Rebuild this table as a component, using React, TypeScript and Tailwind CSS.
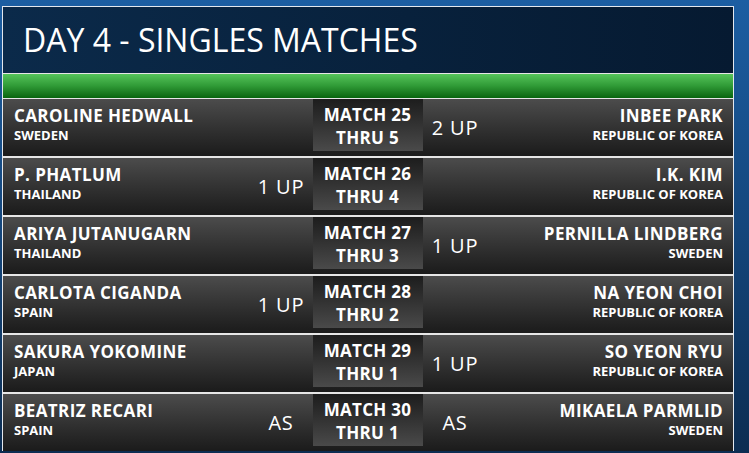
import React from "react";

type Row = {
  l: string; lc: string; ls?: string; m: string; t: string; rs?: string; r: string; rc: string;
};

const rows: Row[] = [
  { l: "CAROLINE HEDWALL", lc: "SWEDEN", m: "MATCH 25", t: "THRU 5", rs: "2 UP", r: "INBEE PARK", rc: "REPUBLIC OF KOREA" },
  { l: "P. PHATLUM", lc: "THAILAND", ls: "1 UP", m: "MATCH 26", t: "THRU 4", r: "I.K. KIM", rc: "REPUBLIC OF KOREA" },
  { l: "ARIYA JUTANUGARN", lc: "THAILAND", m: "MATCH 27", t: "THRU 3", rs: "1 UP", r: "PERNILLA LINDBERG", rc: "SWEDEN" },
  { l: "CARLOTA CIGANDA", lc: "SPAIN", ls: "1 UP", m: "MATCH 28", t: "THRU 2", r: "NA YEON CHOI", rc: "REPUBLIC OF KOREA" },
  { l: "SAKURA YOKOMINE", lc: "JAPAN", m: "MATCH 29", t: "THRU 1", rs: "1 UP", r: "SO YEON RYU", rc: "REPUBLIC OF KOREA" },
  { l: "BEATRIZ RECARI", lc: "SPAIN", ls: "AS", m: "MATCH 30", t: "THRU 1", rs: "AS", r: "MIKAELA PARMLID", rc: "SWEDEN" },
];

export default function App() {
  return (
    <div
      className="w-[749px] h-[453px] overflow-hidden bg-gradient-to-b from-[#1c5ea2] via-[#14467c] to-[#0c2d52] pt-[6px] pl-[2px] text-white"
      style={{ fontFamily: '"Open Sans", "Noto Sans", sans-serif' }}
    >
      <div className="w-[732px] border-x border-t border-[#e4e8ee] bg-[#e6e6e6]">
        <div className="h-[66px] bg-gradient-to-r from-[#0b2a4a] to-[#061a31] pl-[20px] pt-[13px]">
          <div className="text-[32px] leading-[40px] font-normal text-white">DAY 4 - SINGLES MATCHES</div>
        </div>
        <div className="h-[24px] mt-[1px] bg-gradient-to-b from-[#55c45a] via-[#2f9a36] to-[#07650d]" />
        <div className="pt-[1px]">
          {rows.map((r, i) => (
            <div key={i} className="flex h-[57px] mb-[2px] bg-gradient-to-b from-[#4c4c4c] to-[#1b1b1b]">
              <div className="flex-1 pl-[11px] pt-[7px]">
                <div className="text-[17px] leading-[20px] font-bold tracking-[0.4px] whitespace-nowrap">{r.l}</div>
                <div className="text-[13px] leading-[16px] font-bold mt-[1px] whitespace-nowrap">{r.lc}</div>
              </div>
              <div className="w-[63px] text-center pt-[16px] text-[20px] leading-[26px] font-medium tracking-[0.8px]">{r.ls ?? ""}</div>
              <div className="w-[110px] h-[52px] bg-gradient-to-b from-[#1d1d1d] to-[#4a4a4a] text-center pt-[4px] text-[17px] leading-[23px] font-bold tracking-[0.3px] whitespace-nowrap">
                <div>{r.m}</div>
                <div>{r.t}</div>
              </div>
              <div className="w-[65px] text-center pt-[16px] text-[20px] leading-[26px] font-medium tracking-[0.8px]">{r.rs ?? ""}</div>
              <div className="flex-1 pr-[10px] pt-[7px] text-right">
                <div className="text-[17px] leading-[20px] font-bold tracking-[0.4px] whitespace-nowrap">{r.r}</div>
                <div className="text-[13px] leading-[16px] font-bold mt-[1px] whitespace-nowrap">{r.rc}</div>
              </div>
            </div>
          ))}
        </div>
      </div>
    </div>
  );
}
